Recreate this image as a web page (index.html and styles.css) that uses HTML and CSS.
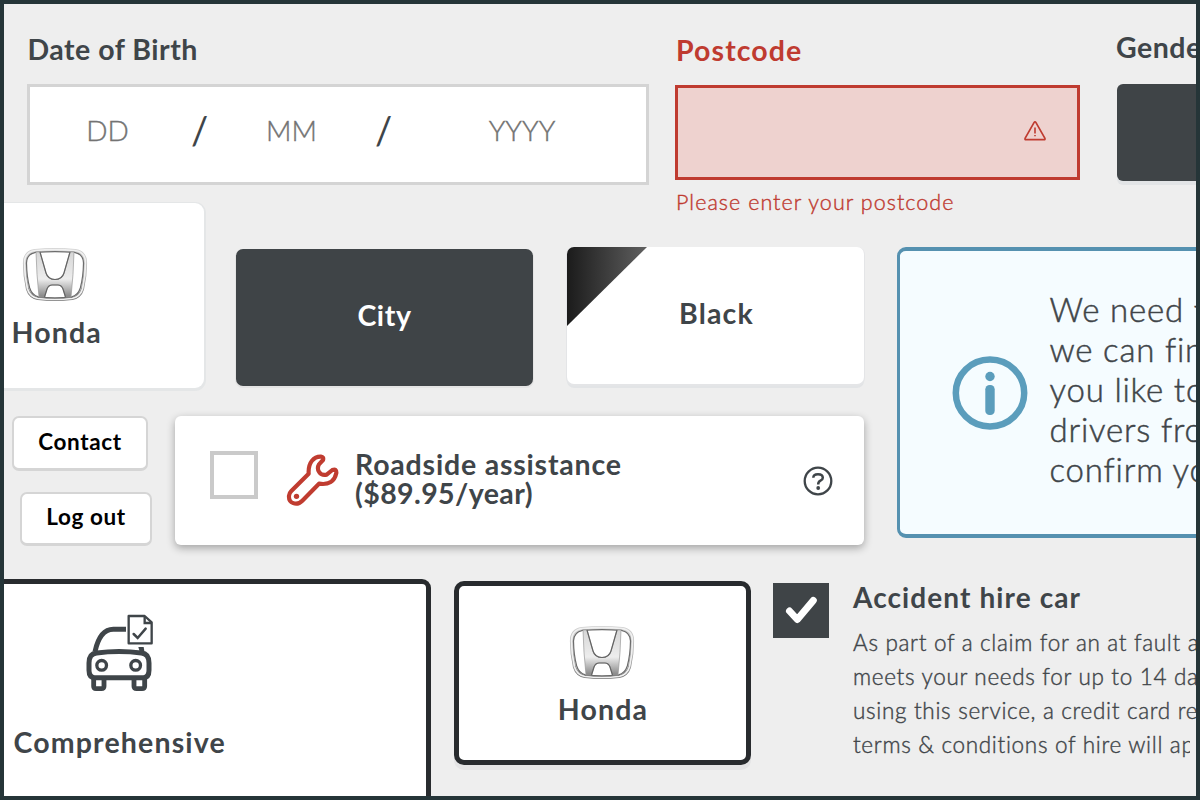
FILE: index.html
```html
<!DOCTYPE html>
<html lang="en">
<head>
<meta charset="utf-8">
<title>Quote form components</title>
<link rel="stylesheet" href="styles.css">
</head>
<body>
<svg class="defs" width="0" height="0" aria-hidden="true">
  <defs>
    <linearGradient id="chrome" x1="0" y1="0" x2="0" y2="1">
      <stop offset="0" stop-color="#d6d6d6"/><stop offset=".6" stop-color="#ededed"/><stop offset="1" stop-color="#858585"/>
    </linearGradient>
    <linearGradient id="ring" x1="0" y1="0" x2="0" y2="1">
      <stop offset="0" stop-color="#d0d0d0"/><stop offset=".5" stop-color="#adadad"/><stop offset="1" stop-color="#777"/>
    </linearGradient>
    <symbol id="honda" viewBox="0 0 66 54">
      <path d="M13 2.500Q33 .8 53 2.500Q63.500 4 63.500 15Q63.500 28 60.500 41Q58 49 50 50.500Q33 52.500 16 50.500Q8 49 5.500 41Q2.500 28 2.500 15Q2.500 4 13 2.500Z" fill="none" stroke="url(#ring)" stroke-width="3.200"/>
      <path d="M13 2.500Q33 .8 53 2.500Q63.500 4 63.500 15Q63.500 28 60.500 41Q58 49 50 50.500Q33 52.500 16 50.500Q8 49 5.500 41Q2.500 28 2.500 15Q2.500 4 13 2.500Z" fill="none" stroke="#f0f0f0" stroke-width="1.700"/>
      <path d="M13.500 4.300Q33 3 52.500 4.300Q61.300 6 61.500 15Q61.300 29 58.300 40Q56 47.500 49.500 48.800Q33 50.700 16.500 48.800Q10 47.500 7.700 40Q4.700 29 4.500 15Q4.700 6 13.500 4.300Z" fill="none" stroke="#6c6c6c" stroke-width="1.200"/>
      <path d="M14 4H18L24 25Q26 31.500 33 31.500Q40 31.500 42 25L48 4H52Q51.500 26 49 49H43.500L41 41Q39.500 37 36 37H30Q26.500 37 25 41L22.500 49H17Q14.500 26 14 4Z" fill="url(#chrome)" stroke="#989898" stroke-width=".7"/>
      <path d="M18 4L24 25Q26 31.500 33 31.500Q40 31.500 42 25L48 4M22.500 49L25 41Q26.500 37 30 37H36Q39.500 37 41 41L43.500 49" fill="none" stroke="#646464" stroke-width="1.200"/>
    </symbol>
  </defs>
</svg>
<main class="board">
  <section class="row row-fields">
    <div class="field field-dob">
      <div class="label">Date of Birth</div>
      <div class="dob-box">
        <span class="ph dd">DD</span><span class="slash">/</span><span class="ph mm">MM</span><span class="slash">/</span><span class="ph yyyy">YYYY</span>
      </div>
    </div>
    <div class="field field-postcode">
      <div class="label">Postcode</div>
      <div class="error-box">
        <svg width="24" height="22" viewBox="0 0 24 22"><path d="M11 2.600Q12 1 13 2.600L21.800 18Q22.500 19.700 21 19.700H3Q1.500 19.700 2.200 18Z" fill="none" stroke="#bf3b30" stroke-width="1.700"/><path d="M12 7.500V13.500M12 15V16.300" stroke="#bf3b30" stroke-width="1.600"/></svg>
      </div>
      <div class="error-text">Please enter your postcode</div>
    </div>
    <div class="field field-gender">
      <div class="label">Gender</div>
      <div class="gender-box"></div>
    </div>
  </section>

  <section class="row row-middle">
    <div class="middle-left">
      <div class="row row-options">
        <div class="tile tile-make">
          <svg class="honda-logo" width="66" height="54"><use href="#honda"/></svg>
          <span class="tile-name">Honda</span>
        </div>
        <div class="tile tile-city"><span class="tile-name city-name">City</span></div>
        <div class="tile tile-black">
          <svg class="swatch" width="80" height="79" viewBox="0 0 80 79"><defs><linearGradient id="blk"><stop offset="0" stop-color="#1b1b1b"/><stop offset="1" stop-color="#606060"/></linearGradient></defs><path d="M0 0H80L0 79Z" fill="url(#blk)"/></svg>
          <span class="tile-name black-name">Black</span>
        </div>
      </div>
      <div class="row row-actions">
        <div class="buttons">
          <div class="btn btn-contact">Contact</div>
          <div class="btn btn-logout">Log out</div>
        </div>
        <div class="roadside">
          <span class="checkbox"></span>
          <svg class="wrench" width="54" height="54" viewBox="858 160 162 162"><path d="M926 222C924 188 942 170 963 171Q972 172 969 181L957 194C948 210 960 230 980 225L997 211Q1010 206 1009 220C1004 244 986 257 957 252L907 303C890 320 865 311 867 288Q868 280 874 274Z" fill="none" stroke="#c03c30" stroke-width="12.500" stroke-linejoin="round"/><circle cx="889.500" cy="290" r="8" fill="#c03c30"/></svg>
          <div class="roadside-title">Roadside assistance<br><span class="price">($89.95/year)</span></div>
          <svg class="help" width="30" height="30" viewBox="0 0 30 30"><circle cx="15" cy="15" r="13.300" fill="none" stroke="#3f4549" stroke-width="2.300"/><path d="M10.300 11.800Q10.300 8.200 15 8.200Q19.800 8.200 19.800 11.700Q19.800 13.600 17.500 14.700Q15.200 15.800 15.200 18.400" fill="none" stroke="#3f4549" stroke-width="2.500"/><circle cx="15.200" cy="22" r="1.900" fill="#3f4549"/></svg>
        </div>
      </div>
    </div>
    <div class="info">
      <svg class="info-icon" width="76" height="76" viewBox="0 0 76 76"><ellipse cx="38" cy="38" rx="34.200" ry="33.400" fill="none" stroke="#5b9dbc" stroke-width="6.500"/><circle cx="38" cy="21.500" r="4.700" fill="#5b9dbc"/><rect x="33.300" y="30" width="9.400" height="30" rx="4.300" fill="#5b9dbc"/></svg>
      <div class="info-text">We need to<br>we can find<br>you like to<br>drivers from<br>confirm your</div>
    </div>
  </section>

  <section class="row row-cover">
    <div class="cover">
      <svg class="car" width="70" height="80" viewBox="255 130 210 240" fill="none" stroke="#3f4549">
        <path d="M285 246C295 200 315 179 340 179H378" stroke-width="15"/>
        <path d="M290 250Q357 241 424 250Q447 252 447 280V302Q447 324 430 324H284Q267 324 267 302V280Q267 252 290 250Z" stroke-width="15"/>
        <path d="M415 232H431L434 250H420Z" fill="#3f4549" stroke="none"/>
        <circle cx="305" cy="287" r="14.500" stroke-width="10"/><circle cx="407" cy="287" r="14.500" stroke-width="10"/>
        <path d="M281 324V350Q281 357 288 357H304Q312 357 312 350V324M402 324V350Q402 357 410 357H426Q434 357 434 350V324" stroke-width="14.500"/>
        <path d="M386 139H434L455 158V221H386Z" stroke-width="7" fill="#fff" stroke-linejoin="round"/>
        <path d="M434 139V160H455" stroke-width="7"/>
        <path d="M401 193L413 205L437 177" stroke-width="7.500" stroke-linecap="round"/>
      </svg>
      <span class="tile-name comp-name">Comprehensive</span>
    </div>
    <div class="tile-selected">
      <svg class="honda-logo" width="66" height="54"><use href="#honda"/></svg>
      <span class="tile-name">Honda</span>
    </div>
    <div class="hire">
      <span class="checked"><svg width="56" height="55" viewBox="0 0 56 55"><path d="M16.500 28L24.300 36.500L40.300 17.500" fill="none" stroke="#fff" stroke-width="7" stroke-linecap="round" stroke-linejoin="round"/></svg></span>
      <div class="hire-copy">
        <div class="hire-title">Accident hire car</div>
        <p class="hire-text">As part of a claim for an at fault accident<br>meets your needs for up to 14 days<br>using this service, a credit card required<br><span class="clip-line">terms &amp; conditions of hire will apply</span></p>
      </div>
    </div>
  </section>
</main>
</body>
</html>
```
FILE: styles.css
```css
* { box-sizing: border-box; }
body { margin: 0; font-family: Lato, "Open Sans", sans-serif; color: #3f4549; }
.defs { display: block; position: absolute; }
svg { display: block; flex: none; }
.board { width: 1200px; height: 800px; border: 4px solid #253538; background: #eee; overflow: hidden; display: flex; flex-direction: column; }
.row { display: flex; align-items: flex-start; flex: none; }
.row-fields { height: 198px; }
.field { flex: none; }
.label { font-size: 28.500px; line-height: 32px; font-weight: 700; letter-spacing: .5px; white-space: nowrap; }

.field-dob { width: 622px; margin-left: 23px; padding-top: 29px; }
.field-dob .label { padding-left: .5px; }
.dob-box { height: 101px; margin-top: 19px; border: 3px solid #d4d4d4; background: #fff; display: flex; align-items: flex-start; padding-top: 26px; line-height: 34px; }
.ph { flex: none; font-size: 28px; font-weight: 300; color: #737373; text-align: center; -webkit-text-stroke: .4px #737373; }
.dd { width: 155px; }
.slash { flex: none; width: 29px; text-align: center; font-size: 38px; }
.mm { width: 155px; }
.yyyy { width: 248px; }

.field-postcode { width: 405px; margin-left: 26px; padding-top: 30px; }
.field-postcode .label { color: #bf3b30; padding-left: 1px; letter-spacing: 1.100px; }
.error-box { height: 95px; margin-top: 19px; border: 3px solid #bf3b30; background: #eed2cf; display: flex; align-items: center; justify-content: flex-end; padding: 0 30px 3px 0; }
.error-text { margin-top: 8px; padding-left: 1px; color: #bf3b30; font-size: 21.500px; line-height: 28px; letter-spacing: 1.040px; white-space: nowrap; font-weight: 300; -webkit-text-stroke: .4px #bf3b30; }
.field-gender { width: 160px; margin-left: 37px; padding-top: 27px; }
.field-gender .label { margin-left: -1px; }
.gender-box { height: 97px; margin-top: 21px; border-radius: 6px; background: #3f4447; box-shadow: 0 4px 0 #e2e4e6; }

.row-middle { height: 373px; }
.middle-left { width: 861px; flex: none; }
.row-options { height: 214px; }
.tile { flex: none; border-radius: 7px; display: flex; align-items: center; justify-content: center; background: #fff; }
.tile-name { font-size: 28.500px; line-height: 34px; font-weight: 700; letter-spacing: 1.150px; white-space: nowrap; }
.tile-make { width: 200px; height: 185px; margin-top: 1px; border-radius: 0 9px 9px 0; box-shadow: 0 1px 0 2px #e4e6e7; flex-direction: column; justify-content: flex-start; align-items: flex-start; padding-top: 45px; }
.tile-make .honda-logo { margin-left: 17.500px; }
.tile-make .tile-name { margin: 13px 0 0 7.500px; }
.tile-city { width: 297px; height: 137px; margin: 47px 0 0 32px; background: #3f4447; color: #fff; box-shadow: 0 1px 0 1px #e4e4e4; }
.city-name { padding-bottom: 5px; letter-spacing: .6px; }
.tile-black { width: 297px; height: 137px; margin: 45px 0 0 34px; overflow: hidden; position: relative; box-shadow: 0 1px 0 1px #e4e5e7, 0 4px 0 #e2e4e6; }
.swatch { position: absolute; left: 0; top: 0; }
.black-name { padding: 0 0 5px 2px; }

.buttons { width: 171px; flex: none; }
.btn { background: #fff; border: 2px solid #d5d5d5; border-bottom-width: 3px; border-radius: 7px; color: #000; font-size: 22.500px; line-height: 26px; font-weight: 700; letter-spacing: .6px; text-align: center; white-space: nowrap; }
.btn-contact { width: 136px; height: 55px; margin-left: 8px; padding-top: 11px; }
.btn-logout { width: 132px; height: 54px; margin: 21px 0 0 16px; padding-top: 10px; }
.roadside { width: 689px; height: 129px; border-radius: 6px; background: #fff; box-shadow: 0 3px 9px rgba(0,0,0,.32); display: flex; align-items: flex-start; }
.checkbox { width: 48px; height: 48px; margin: 35px 0 0 35px; border: 4.500px solid #cacaca; flex: none; }
.wrench { margin: 37px 0 0 28px; }
.roadside-title { flex: none; width: 448px; margin: 34px 0 0 15px; font-size: 28.500px; line-height: 29px; font-weight: 700; letter-spacing: .800px; white-space: nowrap; }
.price { letter-spacing: .4px; }
.help { margin-top: 50px; }

.info { width: 340px; height: 291px; flex: none; margin: 45px 0 0 32px; border: 4px solid #5591b0; border-left-width: 3px; border-radius: 9px; background: #f5fcff; display: flex; align-items: flex-start; }
.info-icon { margin: 103.500px 0 0 51.500px; }
.info-text { margin: 37.500px 0 0 22px; font-size: 33px; line-height: 40.200px; font-weight: 300; letter-spacing: .8px; white-space: nowrap; -webkit-text-stroke: .5px #3f4549; }

.row-cover { height: 221px; }
.cover { width: 427px; height: 240px; flex: none; margin-top: 4px; background: #fff; border: 5px solid #282b2e; border-left: 0; border-radius: 0 9px 0 0; padding-top: 29px; }
.car { margin-left: 81px; }
.comp-name { display: block; margin: 32px 0 0 9.500px; }
.tile-selected { width: 297px; height: 184px; flex: none; margin: 6px 0 0 23px; background: #fff; border: 5px solid #282b2e; border-radius: 10px; box-shadow: 0 5px 0 #e4e4e5; display: flex; flex-direction: column; align-items: center; padding-top: 40px; }
.tile-selected .honda-logo { margin-right: 2px; }
.tile-selected .tile-name { margin-top: 12px; padding-left: 1px; }
.hire { display: flex; flex: none; margin: 8px 0 0 22px; }
.checked { width: 56px; height: 55px; background: #3f4447; flex: none; }
.hire-copy { margin-left: 24px; white-space: nowrap; }
.hire-title { font-size: 28px; line-height: 30px; margin-top: -1px; font-weight: 700; letter-spacing: 1.100px; }
.hire-text { margin: 13.500px 0 0; font-size: 22.500px; line-height: 34.300px; font-weight: 300; letter-spacing: .680px; -webkit-text-stroke: .4px #3f4549; }
.clip-line { display: block; width: 337px; overflow: hidden; }
```
